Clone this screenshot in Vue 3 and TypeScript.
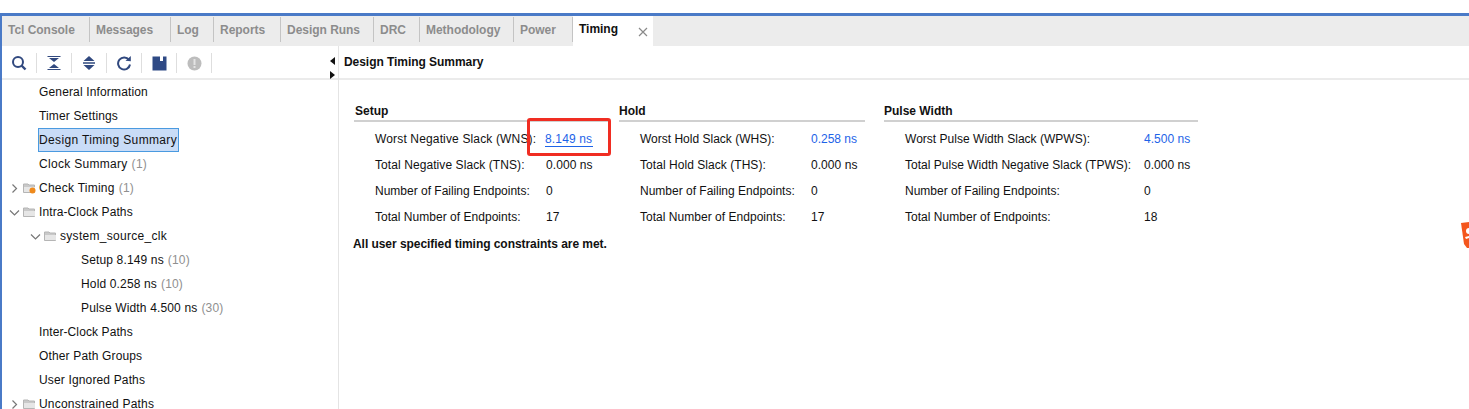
<script setup lang="ts">
interface Tab { label: string; width: number; active?: boolean }
interface Node { label: string; count?: string; indent: number; arrow?: 'right' | 'down'; folder?: boolean; dot?: boolean; selected?: boolean; spacing?: number }
interface Row { label: string; value: string; link?: boolean; boxed?: boolean; spacing?: number }
interface Section { title: string; width: number; labelWidth: number; rows: Row[] }

const tabs: Tab[] = [
  { label: 'Tcl Console', width: 88 },
  { label: 'Messages', width: 81 },
  { label: 'Log', width: 43 },
  { label: 'Reports', width: 67 },
  { label: 'Design Runs', width: 93 },
  { label: 'DRC', width: 46 },
  { label: 'Methodology', width: 94 },
  { label: 'Power', width: 59 },
  { label: 'Timing', width: 80, active: true }
]

const nodes: Node[] = [
  { label: 'General Information', indent: 39 },
  { label: 'Timer Settings', indent: 39 },
  { label: 'Design Timing Summary', indent: 39, selected: true, spacing: 0.35 },
  { label: 'Clock Summary', count: '(1)', indent: 39, spacing: 0.3 },
  { label: 'Check Timing', count: '(1)', indent: 39, arrow: 'right', folder: true, dot: true, spacing: 0.25 },
  { label: 'Intra-Clock Paths', indent: 39, arrow: 'down', folder: true, spacing: 0.1 },
  { label: 'system_source_clk', indent: 60, arrow: 'down', folder: true, spacing: 0.3 },
  { label: 'Setup 8.149 ns', count: '(10)', indent: 81 },
  { label: 'Hold 0.258 ns', count: '(10)', indent: 81 },
  { label: 'Pulse Width 4.500 ns', count: '(30)', indent: 81 },
  { label: 'Inter-Clock Paths', indent: 39, spacing: 0.1 },
  { label: 'Other Path Groups', indent: 39 },
  { label: 'User Ignored Paths', indent: 39 },
  { label: 'Unconstrained Paths', indent: 39, arrow: 'right', folder: true, spacing: 0.2 }
]

const sections: Section[] = [
  {
    title: 'Setup', width: 255, labelWidth: 171,
    rows: [
      { label: 'Worst Negative Slack (WNS):', value: '8.149 ns', link: true, boxed: true, spacing: 0.15 },
      { label: 'Total Negative Slack (TNS):', value: '0.000 ns', spacing: 0.08 },
      { label: 'Number of Failing Endpoints:', value: '0' },
      { label: 'Total Number of Endpoints:', value: '17', spacing: 0.03 }
    ]
  },
  {
    title: 'Hold', width: 246, labelWidth: 171,
    rows: [
      { label: 'Worst Hold Slack (WHS):', value: '0.258 ns', link: true },
      { label: 'Total Hold Slack (THS):', value: '0.000 ns', spacing: 0.05 },
      { label: 'Number of Failing Endpoints:', value: '0' },
      { label: 'Total Number of Endpoints:', value: '17', spacing: 0.03 }
    ]
  },
  {
    title: 'Pulse Width', width: 314, labelWidth: 239,
    rows: [
      { label: 'Worst Pulse Width Slack (WPWS):', value: '4.500 ns', link: true, spacing: 0.02 },
      { label: 'Total Pulse Width Negative Slack (TPWS):', value: '0.000 ns', spacing: 0.02 },
      { label: 'Number of Failing Endpoints:', value: '0' },
      { label: 'Total Number of Endpoints:', value: '18', spacing: 0.03 }
    ]
  }
]
</script>

<template>
  <div class="page">
    <div class="frame">
      <div class="tabs">
        <div
          v-for="t in tabs"
          :key="t.label"
          class="tab"
          :class="{ active: t.active }"
          :style="{ width: t.width + 'px' }"
        >
          <span>{{ t.label }}</span>
          <svg v-if="t.active" class="close" width="10" height="10" viewBox="0 0 10 10">
            <path d="M1 1 L9 9 M9 1 L1 9" stroke="#8a8a8a" stroke-width="1.2" fill="none" />
          </svg>
        </div>
      </div>
      <div class="body">
        <aside class="side">
          <div class="toolbar">
            <div class="tool">
              <svg width="16" height="16" viewBox="0 0 16 16">
                <circle cx="7" cy="7" r="5" fill="none" stroke="#31497f" stroke-width="2" />
                <path d="M10.5 10.5 L14.5 14.5" stroke="#31497f" stroke-width="2.4" />
              </svg>
            </div>
            <div class="tool">
              <svg width="14" height="16" viewBox="0 0 14 16">
                <path d="M0.5 1 H13.5 V2 H0.5 Z M2 3 H12 L7 7 Z M7 9 L12 13 H2 Z M0.5 14 H13.5 V15 H0.5 Z" fill="#31497f" />
              </svg>
            </div>
            <div class="tool">
              <svg width="14" height="16" viewBox="0 0 14 16">
                <path d="M7 1 L12.5 6 H1.5 Z M1 7.3 H13 V8.7 H1 Z M1.5 10 H12.5 L7 15 Z" fill="#31497f" />
              </svg>
            </div>
            <div class="tool">
              <svg width="16" height="16" viewBox="0 0 16 16">
                <path d="M13 5 A6 6 0 1 0 14 9.5" fill="none" stroke="#31497f" stroke-width="2" />
                <path d="M9.5 5.8 L14.8 6.3 L14.8 1 Z" fill="#31497f" />
              </svg>
            </div>
            <div class="tool">
              <svg width="15" height="15" viewBox="0 0 15 15">
                <path fill-rule="evenodd" d="M0.5 0.5 H14.5 V14.5 H0.5 Z M8 0.5 V5 H11 V0.5 Z" fill="#2f4a85" />
              </svg>
            </div>
            <div class="tool">
              <svg width="15" height="15" viewBox="0 0 15 15">
                <circle cx="7.5" cy="7.5" r="7" fill="#bdbdbd" />
                <rect x="6.5" y="3" width="2" height="6" fill="#e4e4e4" />
                <rect x="6.5" y="10" width="2" height="2" fill="#e4e4e4" />
              </svg>
            </div>
          </div>
          <div class="tree">
            <div
              v-for="n in nodes"
              :key="n.label"
              class="node"
              :style="{ paddingLeft: n.indent + 'px', letterSpacing: (n.spacing ?? 0.15) + 'px' }"
            >
              <svg v-if="n.arrow" class="arrow" :style="{ left: n.indent - 30 + 'px' }" width="11" height="11" viewBox="0 0 11 11">
                <path v-if="n.arrow === 'right'" d="M3.5 1.5 L7.5 5.5 L3.5 9.5" fill="none" stroke="#777" stroke-width="1.2" />
                <path v-else d="M1 3.5 L5.5 8 L10 3.5" fill="none" stroke="#777" stroke-width="1.2" />
              </svg>
              <svg v-if="n.folder" class="folder" :style="{ left: n.indent - 16 + 'px' }" width="13" height="12" viewBox="0 0 13 12">
                <path d="M0.5 2 H5 L6 3 H11.5 V10.5 H0.5 Z" fill="#c9c9c9" stroke="#b5b5b5" />
                <path d="M1 5 H12 V10 H1 Z" fill="#e6e6e6" />
                <circle v-if="n.dot" cx="9.5" cy="8.5" r="3" fill="#ef8a1c" />
              </svg>
              <span class="label" :class="{ selected: n.selected }">{{ n.label }}</span>
              <span v-if="n.count" class="count">{{ n.count }}</span>
            </div>
          </div>
        </aside>
        <main class="main">
          <div class="splitter">
            <i class="tri left"></i>
            <i class="tri right"></i>
          </div>
          <div class="title">Design Timing Summary</div>
          <div class="content">
            <div class="sections">
              <section v-for="s in sections" :key="s.title" class="section" :style="{ width: s.width + 'px' }">
                <h3>{{ s.title }}</h3>
                <div v-for="r in s.rows" :key="r.label" class="row" :style="{ letterSpacing: (r.spacing ?? 0) + 'px' }">
                  <span class="key" :style="{ width: s.labelWidth + 'px' }">{{ r.label }}</span>
                  <span class="val" :class="{ link: r.link, boxed: r.boxed }">{{ r.value }}</span>
                </div>
              </section>
            </div>
            <p class="met">All user specified timing constraints are met.</p>
          </div>
        </main>
      </div>
    </div>
    <svg class="logo" width="8" height="26" viewBox="0 0 8 26">
      <path d="M0 1 L8 0 V26 H6 L3 22 Z" fill="#f4561d" />
      <path d="M8 6 A3 3 0 0 0 5 9 A3 3 0 0 0 8 12 Z" fill="#fff" />
      <path d="M8 14 L4 15 L5 17 L8 16 Z" fill="#fff" />
    </svg>
  </div>
</template>

<style>
html, body { margin: 0; background: #fff; }
</style>

<style scoped>
.page {
  position: relative;
  width: 1469px;
  height: 409px;
  overflow: hidden;
  background: #fff;
  padding-top: 13px;
  box-sizing: border-box;
  font-family: "Liberation Sans", Arial, sans-serif;
  font-size: 12px;
  color: #111;
}
.frame {
  border-top: 3px solid #4a7ac7;
  border-left: 2px solid #4a7ac7;
  height: 393px;
}
.tabs {
  display: flex;
  height: 30px;
  background: #ececec;
}
.tab {
  box-sizing: border-box;
  padding: 0 0 0 6px;
  height: 25px;
  margin-top: 1px;
  line-height: 26px;
  font-weight: 700;
  letter-spacing: -0.03px;
  color: #8c8c8c;
  border-right: 1px solid #c4c4c4;
  white-space: nowrap;
  position: relative;
}
.tab.active {
  height: 30px;
  margin-top: 0;
  background: #fff;
  color: #111;
  border-right: 0;
  line-height: 27px;
  padding-left: 6px;
}
.close { position: absolute; left: 65px; top: 11px; }
.body { display: flex; height: 363px; }
.side { width: 337px; flex: none; border-right: 1px solid #e4e4e4; box-sizing: border-box; }
.toolbar {
  display: flex;
  height: 32px;
  border-bottom: 2px solid #ebebeb;
}
.tool {
  box-sizing: border-box;
  width: 35px;
  height: 20px;
  margin-top: 7px;
  border-right: 1px solid #dedede;
  display: flex;
  align-items: center;
  justify-content: center;
}
.tree { overflow: hidden; }
.node {
  position: relative;
  height: 24px;
  line-height: 24px;
  margin-left: -2px;
  white-space: nowrap;
}
.arrow { position: absolute; top: 7px; }
.folder { position: absolute; top: 6px; }
.count { color: #8f8f8f; margin-left: 4px; }
.selected {
  display: inline-block;
  height: 24px;
  line-height: 22px;
  box-sizing: border-box;
  background: #c9dcf7;
  border: 1px solid #4a9ae0;
  margin-left: -1px;
  padding: 0 1px 0 0;
}
.main { position: relative; flex: 1; min-width: 0; }
.splitter {
  position: absolute;
  left: -9px;
  top: 11px;
  display: flex;
  flex-direction: column;
  gap: 6px;
}
.tri { display: block; width: 0; height: 0; border-top: 4px solid transparent; border-bottom: 4px solid transparent; }
.tri.left { border-right: 5px solid #111; }
.tri.right { border-left: 5px solid #111; }
.title {
  height: 32px;
  line-height: 32px;
  padding-left: 5px;
  font-weight: 700;
  letter-spacing: -0.05px;
  border-bottom: 2px solid #ebebeb;
}
.content { padding: 24px 0 0 15px; }
.sections { display: flex; gap: 10px; }
.section:nth-child(2) { margin-right: 9px; }
h3 {
  margin: 0 0 4px;
  line-height: 15px;
  font-size: 12px;
  font-weight: 700;
  border-bottom: 2px solid #d0d0d0;
  height: 16px;
}
.section:first-child h3 { padding-left: 1px; }
.row {
  display: flex;
  height: 26px;
  line-height: 26px;
  padding-left: 21px;
  white-space: nowrap;
}
.key { flex: none; }
.val { position: relative; }
.link { color: #1d63e8; }
.boxed { margin-left: -1px; }
.boxed::before {
  content: "";
  position: absolute;
  left: -18px;
  top: -8px;
  width: 78px;
  height: 32px;
  border: 3px solid #f02d22;
  border-radius: 3px;
  pointer-events: none;
}
.boxed::after {
  content: "";
  position: absolute;
  left: 0;
  right: -1px;
  top: 20px;
  height: 1px;
  background: #1d63e8;
}
.met { margin: 6px 0 0 -1px; font-weight: 700; letter-spacing: -0.05px; line-height: 16px; }
.logo { position: absolute; left: 1461px; top: 222px; }
</style>
